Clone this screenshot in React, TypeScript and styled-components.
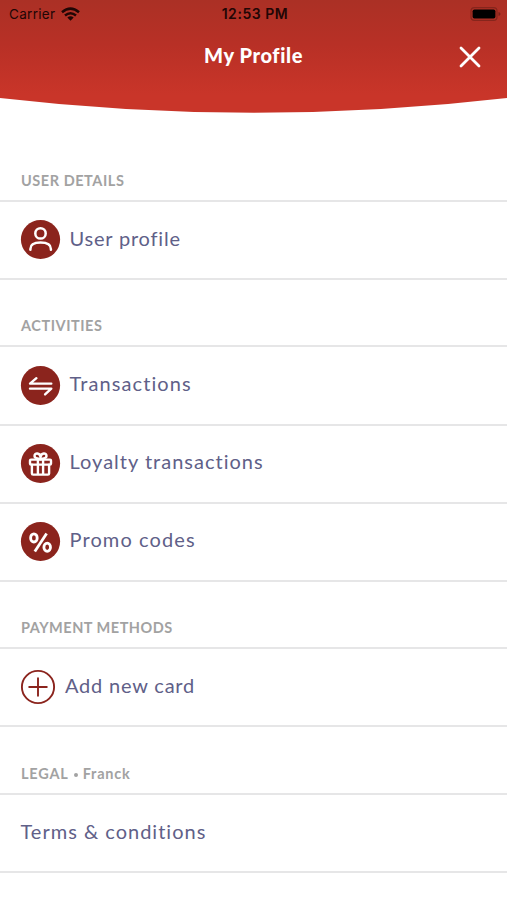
import React from "react";
import styled, { createGlobalStyle } from "styled-components";

const GlobalStyle = createGlobalStyle`
  * { box-sizing: border-box; }
  body { margin: 0; background: #fff; }
`;

const Screen = styled.main`
  width: 507px;
  height: 900px;
  overflow: hidden;
  background: #fff;
  font-family: Lato, sans-serif;
`;

const Header = styled.header`
  height: 113px;
  background: linear-gradient(#ab3025 0, #b83026 45px, #c93529 95px, #c93529 113px);
  clip-path: path("M0 0H507V98Q253.5 127.5 0 98Z");
`;

const StatusBar = styled.div`
  display: grid;
  grid-template-columns: 1fr auto 1fr;
  align-items: center;
  height: 27px;
  padding: 0 6px 0 9px;
  color: #210605;
  font-family: Inter, sans-serif;
  font-size: 13.5px;
`;

const Carrier = styled.div`
  display: flex;
  align-items: center;
  gap: 5.5px;
  letter-spacing: 0.3px;
`;

const Time = styled.div`
  font-weight: 600;
  font-size: 14px;
  letter-spacing: 0.55px;
`;

const Battery = styled.svg`
  justify-self: end;
`;

const TitleBar = styled.div`
  display: grid;
  grid-template-columns: 1fr auto 1fr;
  align-items: center;
  height: 60px;
  padding-right: 26px;
  padding-left: 26px;
`;

const Title = styled.h1`
  grid-column: 2;
  margin: 0 0 4px;
  color: #fff;
  font-size: 20px;
  font-weight: 900;
  line-height: 24px;
  letter-spacing: 0.6px;
`;

const CloseButton = styled.button`
  display: flex;
  justify-self: end;
  padding: 0;
  border: 0;
  background: none;
`;

const List = styled.div`
  padding-top: 21.4px;
`;

const SectionTitle = styled.h2<{ $spacing: number }>`
  display: flex;
  align-items: flex-end;
  height: 67.5px;
  margin: 0;
  padding: 0 21px 10px;
  border-bottom: 2px solid #e6e6e7;
  color: #a2a2a2;
  font-size: 14.5px;
  font-weight: 700;
  line-height: 18px;
  letter-spacing: ${(p) => p.$spacing}px;
`;

const Bullet = styled.span`
  width: 4px;
  height: 4px;
  margin: 0 5px 6px;
  border-radius: 50%;
  background: #a2a2a2;
`;

const Row = styled.div<{ $gap: number }>`
  display: flex;
  align-items: center;
  gap: ${(p) => p.$gap}px;
  height: 78.1px;
  padding: 0 20.5px;
  border-bottom: 2px solid #e6e6e7;
`;

const RowLabel = styled.span<{ $spacing: number }>`
  margin-bottom: 4.6px;
  color: #606088;
  font-size: 20px;
  line-height: 26px;
  letter-spacing: ${(p) => p.$spacing}px;
  white-space: nowrap;
`;

const Badge = styled.svg<{ $stroke?: number }>`
  flex: none;
  display: block;
  overflow: visible;
  fill: none;
  stroke: #fff;
  stroke-width: ${(p) => p.$stroke ?? 2.4};
  stroke-linecap: round;
  stroke-linejoin: round;
`;

const Disc = () => <circle cx="20" cy="19.5" r="19.6" fill="#8b241d" stroke="none" />;

const UserIcon = () => (
  <Badge width="39" height="39" viewBox="0.5 0 39 39" $stroke={2.5}>
    <Disc />
    <circle cx="20" cy="13.4" r="5.2" />
    <path d="M9.9 29.7v-.8c0-4.4 3.3-6.3 10.1-6.3s10.4 1.9 10.4 6.3v.8" />
  </Badge>
);

const TransferIcon = () => (
  <Badge width="39" height="39" viewBox="0.5 0 39 39">
    <Disc />
    <path d="M30.8 17.6H9.5l6.4-5.4M9.5 22.6h21.3l-6.2 5.8" />
  </Badge>
);

const GiftIcon = () => (
  <Badge width="39" height="39" viewBox="0 0 39 39">
    <circle cx="19.5" cy="19.5" r="19.6" fill="#8b241d" stroke="none" />
    <rect x="9" y="15.6" width="21" height="5" rx="1" />
    <path d="M10.9 20.6v8.8q0 1.2 1.2 1.2h14.8q1.2 0 1.2-1.2v-8.8M16.9 15.9v14.4M22.1 15.9v14.4M19.5 15.2c-2-.8-6-.3-6-3.2 0-3.6 5.6-3.4 6 1M19.5 15.2c2-.8 6-.3 6-3.2 0-3.6-5.4-3.4-6 1" />
  </Badge>
);

const PercentIcon = () => (
  <Badge width="39" height="39" viewBox="0 0 39 39" $stroke={2.8}>
    <circle cx="19.5" cy="19.5" r="19.6" fill="#8b241d" stroke="none" />
    <ellipse cx="12.9" cy="15.9" rx="3.3" ry="4.1" />
    <ellipse cx="26.2" cy="25.2" rx="3.3" ry="4.1" />
    <path d="M25.6 11.4 13.8 29.6" strokeLinecap="butt" />
  </Badge>
);

const AddIcon = () => (
  <Badge width="34" height="34" viewBox="0 0 34 34" $stroke={1.9}>
    <g stroke="#8b241d">
      <circle cx="17" cy="17" r="16.1" />
      <path d="M8.2 17h17.6M17 8.2v17.6" />
    </g>
  </Badge>
);

type Item = { label: string; spacing: number; icon?: React.ReactNode; gap?: number };
type Section = { title: string; note?: string; spacing: number; items: Item[] };

const sections: Section[] = [
  {
    title: "USER DETAILS",
    spacing: 0.55,
    items: [{ label: "User profile", spacing: 0.8, icon: <UserIcon /> }],
  },
  {
    title: "ACTIVITIES",
    spacing: 0.55,
    items: [
      { label: "Transactions", spacing: 1.1, icon: <TransferIcon /> },
      { label: "Loyalty transactions", spacing: 1, icon: <GiftIcon /> },
      { label: "Promo codes", spacing: 1.1, icon: <PercentIcon /> },
    ],
  },
  {
    title: "PAYMENT METHODS",
    spacing: 0.5,
    items: [{ label: "Add new card", spacing: 0.8, icon: <AddIcon />, gap: 10.5 }],
  },
  {
    title: "LEGAL",
    note: "Franck",
    spacing: 0.8,
    items: [{ label: "Terms & conditions", spacing: 1 }],
  },
];

export default function App() {
  return (
    <Screen>
      <GlobalStyle />
      <Header>
        <StatusBar>
          <Carrier>
            Carrier
            <svg width="19" height="14" viewBox="0 0 19 14">
              <g fill="none" stroke="#210605" strokeWidth="2.5">
                <path d="M1 5.2Q9.5-2 18 5.2" />
                <path d="M4 8.5Q9.5 3.9 15 8.5" />
              </g>
              <path d="M6.3 10.5Q9.5 8 12.7 10.5L9.5 13.8Z" fill="#210605" />
            </svg>
          </Carrier>
          <Time>12:53 PM</Time>
          <Battery width="31" height="14" viewBox="0 0 31 14">
            <rect x="1" y=".7" width="26" height="12.6" rx="3.4" fill="none" stroke="#86251c" strokeWidth="1.2" />
            <rect x="2.6" y="2.4" width="22.8" height="9.2" rx="1.8" fill="#000" />
            <path d="M28.5 5v4q2-.7 2-2t-2-2Z" fill="#7b211a" />
          </Battery>
        </StatusBar>
        <TitleBar>
          <Title>My Profile</Title>
          <CloseButton aria-label="Close">
            <svg width="22" height="22" viewBox="0 0 22 22">
              <path d="M2 2l18 18M20 2 2 20" stroke="#fff" strokeWidth="2.8" strokeLinecap="round" />
            </svg>
          </CloseButton>
        </TitleBar>
      </Header>
      <List>
        {sections.map((section) => (
          <section key={section.title}>
            <SectionTitle $spacing={section.spacing}>
              {section.title}
              {section.note && (
                <>
                  <Bullet />
                  {section.note}
                </>
              )}
            </SectionTitle>
            {section.items.map((item) => (
              <Row key={item.label} $gap={item.gap ?? 10}>
                {item.icon}
                <RowLabel $spacing={item.spacing}>{item.label}</RowLabel>
              </Row>
            ))}
          </section>
        ))}
      </List>
    </Screen>
  );
}
